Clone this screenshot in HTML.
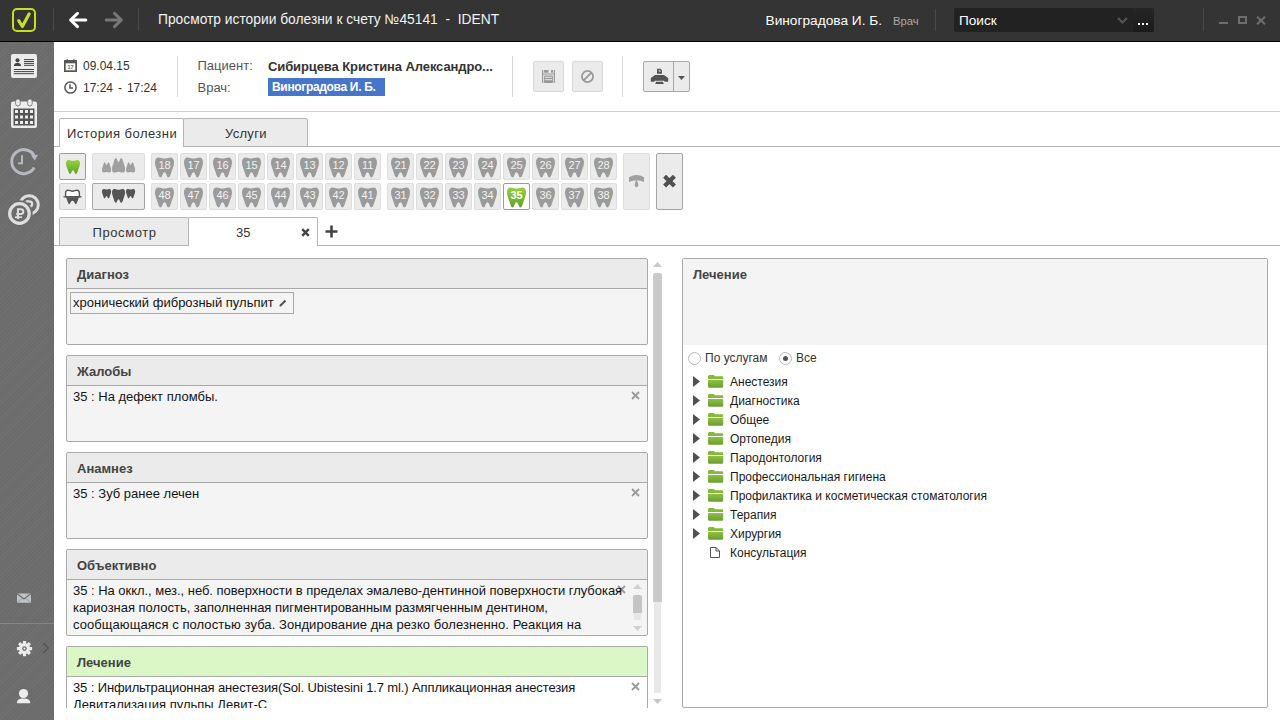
<!DOCTYPE html>
<html><head><meta charset="utf-8">
<style>
*{box-sizing:border-box;margin:0;padding:0}
html,body{width:1280px;height:720px;overflow:hidden;background:#fff;font-family:"Liberation Sans",sans-serif;color:#222}
.a{position:absolute}
.t{position:absolute;white-space:nowrap;line-height:1}
#title{left:0;top:0;width:1280px;height:41px;background:#343434}
#tline{left:0;top:41px;width:1280px;height:1px;background:#000}
#side{left:0;top:42px;width:54px;height:678px;background:repeating-linear-gradient(-45deg,#6b6b6b 0px,#6b6b6b 2px,#707070 2px,#707070 3px)}
.vsep{position:absolute;width:1px;background:#4a4a4a}
.hsep{position:absolute;width:1px;background:#d8d8d8}
.btn{position:absolute;background:#ebebeb;border:1px solid #dedede;border-radius:2px}
.tb{position:absolute;width:27px;height:27px;background:#ebebeb;border:1px solid #e0e0e0;border-radius:2px}
.tb svg{position:absolute;left:3px;top:3px}
.panel{position:absolute;left:66px;width:582px;height:87px;border:1px solid #a9a9a9;border-radius:2px;background:#f4f4f4;overflow:hidden}
.panel .hd{position:absolute;left:0;top:0;width:100%;height:30px;background:#ebebeb;border-bottom:1px solid #a9a9a9}
.panel .hd span{position:absolute;left:10px;top:9px;font-size:13px;font-weight:bold;color:#444;line-height:1}
.panel .bd{position:absolute;left:6px;top:32px;font-size:13px;line-height:17px;color:#141414;white-space:nowrap}
.panel .x{position:absolute;left:566px;top:37px}
.tree{position:absolute;left:0;font-size:12px;color:#222;white-space:nowrap}
</style></head><body>

<!-- TITLE BAR -->
<div class="a" id="title"></div>
<div class="a" id="tline"></div>
<!-- logo -->
<div class="a" style="left:12px;top:8px;width:24px;height:24px;border:2.5px solid #c6de24;border-radius:5px"></div>
<svg class="a" style="left:12px;top:8px" width="24" height="24" viewBox="0 0 24 24"><path d="M6.7 12.6 L10.4 18.5 L17.2 5.8" fill="none" stroke="#c6de24" stroke-width="3.2" stroke-linecap="round" stroke-linejoin="round"/></svg>
<div class="vsep" style="left:53px;top:8px;height:23px"></div>
<svg class="a" style="left:68px;top:11px" width="20" height="18" viewBox="0 0 20 18"><path d="M17.8 9 H3 M9.5 2.3 L2.6 9 L9.5 15.7" fill="none" stroke="#fff" stroke-width="3" stroke-linecap="round" stroke-linejoin="round"/></svg>
<svg class="a" style="left:104px;top:11px" width="20" height="18" viewBox="0 0 20 18"><path d="M2.2 9 H17 M10.5 2.3 L17.4 9 L10.5 15.7" fill="none" stroke="#777" stroke-width="3" stroke-linecap="round" stroke-linejoin="round"/></svg>
<div class="vsep" style="left:138px;top:8px;height:23px"></div>
<div class="t" style="left:158px;top:13px;font-size:13.8px;color:#f2f2f2">Просмотр истории болезни к счету №45141 &nbsp;- &nbsp;IDENT</div>
<div class="t" style="left:765.5px;top:13.5px;font-size:13.7px;color:#fff">Виноградова И. Б.</div>
<div class="t" style="left:893px;top:15.5px;font-size:11.3px;color:#aaa">Врач</div>
<div class="vsep" style="left:935px;top:9px;height:22px"></div>
<div class="a" style="left:954px;top:8px;width:200px;height:24px;background:#222;border-radius:2px"></div>
<div class="a" style="left:1133px;top:8px;width:21px;height:24px;background:linear-gradient(#262626,#1b1b1b);border-radius:0 2px 2px 0"></div>
<div class="t" style="left:959px;top:14px;font-size:13.6px;color:#fff">Поиск</div>
<svg class="a" style="left:1117px;top:17px" width="11" height="7" viewBox="0 0 11 7"><path d="M1 1 L5.5 5.5 L10 1" fill="none" stroke="#555" stroke-width="2"/></svg>
<div class="a" style="left:1138px;top:23px;width:2px;height:2px;background:#fff"></div>
<div class="a" style="left:1142px;top:23px;width:2px;height:2px;background:#fff"></div>
<div class="a" style="left:1146px;top:23px;width:2px;height:2px;background:#fff"></div>
<div class="vsep" style="left:1203px;top:8px;height:23px"></div>
<div class="a" style="left:1219px;top:22px;width:9px;height:2px;background:#6e6e6e"></div>
<div class="a" style="left:1238px;top:16px;width:9px;height:8px;border:2px solid #6e6e6e"></div>
<svg class="a" style="left:1256px;top:16px" width="10" height="9" viewBox="0 0 10 9"><path d="M1 0.8 L9 8.2 M9 0.8 L1 8.2" stroke="#6e6e6e" stroke-width="2"/></svg>

<!-- SIDEBAR -->
<div class="a" id="side"></div>

<!-- SIDEBAR ICONS -->
<svg class="a" style="left:0;top:42px" width="54" height="678" viewBox="0 42 54 678">
<!-- card -->
<rect x="11" y="54" width="26" height="24" rx="2" fill="#ececec"/>
<circle cx="17.5" cy="60.2" r="2" fill="#444"/>
<path d="M13.8 66C14.2 63.8 15.6 62.8 17.5 62.8C19.4 62.8 20.8 63.8 21.2 66Z" fill="#444"/>
<path d="M24 59.6H34M24 61.5H34M24 63.4H34M24 65.3H34M13.8 69.5H34M13.8 71.6H34M13.8 73.7H34" stroke="#444" stroke-width="1"/>
<!-- calendar -->
<rect x="11" y="101.5" width="26" height="26.5" rx="2" fill="#ececec"/>
<rect x="13.5" y="108.5" width="21" height="17" fill="#555"/>
<g fill="#ececec">
<rect x="15" y="110" width="3" height="3"/><rect x="20" y="110" width="3" height="3"/><rect x="25" y="110" width="3" height="3"/><rect x="30" y="110" width="3" height="3"/>
<rect x="15" y="115.5" width="3" height="3"/><rect x="20" y="115.5" width="3" height="3"/><rect x="25" y="115.5" width="3" height="3"/><rect x="30" y="115.5" width="3" height="3"/>
<rect x="15" y="121" width="3" height="3"/><rect x="20" y="121" width="3" height="3"/><rect x="25" y="121" width="3" height="3"/><rect x="30" y="121" width="3" height="3"/>
</g>
<rect x="15.6" y="99" width="4.6" height="7" rx="2.3" fill="#ececec" stroke="#6b6b6b" stroke-width="0.8"/>
<rect x="27.6" y="99" width="4.6" height="7" rx="2.3" fill="#ececec" stroke="#6b6b6b" stroke-width="0.8"/>
<!-- history -->
<path d="M34.6 156.5A12 12 0 1 0 34.2 167.5" fill="none" stroke="#b6b9c0" stroke-width="3"/>
<path d="M31 155.5L34.8 160.5L38 154.8Z" fill="#b6b9c0"/>
<path d="M22 155.3V163.2H18.2" fill="none" stroke="#b6b9c0" stroke-width="2"/>
<!-- coins -->
<circle cx="29.2" cy="204.8" r="9.1" fill="none" stroke="#dedede" stroke-width="3"/>
<path d="M25.8 201.3H29.2C31.3 201.3 32.2 202.6 32.2 203.9C32.2 205.3 31.2 206.6 29.2 206.6" fill="none" stroke="#dedede" stroke-width="2.2"/>
<circle cx="19.45" cy="213.5" r="13.2" fill="#6c6c6c"/>
<circle cx="19.45" cy="213.5" r="9.8" fill="none" stroke="#dedede" stroke-width="3.2"/>
<path d="M17.9 219V209.2H20.6C22.5 209.2 23.3 210.4 23.3 211.6C23.3 212.9 22.5 214.1 20.6 214.1H16.3" fill="none" stroke="#dedede" stroke-width="2"/>
<path d="M15 217.2H22" stroke="#dedede" stroke-width="1.7"/>
<!-- mail -->
<rect x="17" y="593.5" width="14" height="9.2" rx="0.8" fill="#c0c3ca"/>
<path d="M17.3 593.8L24 599L30.7 593.8" fill="none" stroke="#6c6c6c" stroke-width="1.1"/><path d="M17.5 602.5L22.3 598M30.5 602.5L25.7 598" fill="none" stroke="#8a8c90" stroke-width="0.7"/>
<!-- separator -->
<rect x="0" y="623" width="54" height="1" fill="#858585"/>
<!-- gear -->
<g transform="translate(24.5 648.6)" fill="#ececec">
<circle r="5.6"/>
<rect x="-1.6" y="-7.6" width="3.2" height="15.2"/>
<rect x="-1.6" y="-7.6" width="3.2" height="15.2" transform="rotate(45)"/>
<rect x="-1.6" y="-7.6" width="3.2" height="15.2" transform="rotate(90)"/>
<rect x="-1.6" y="-7.6" width="3.2" height="15.2" transform="rotate(135)"/>
<circle r="2.3" fill="#6b6b6b"/><circle r="1.1" fill="#ececec"/>
</g>
<path d="M43.5 643L48 648L43.5 653" fill="none" stroke="#585858" stroke-width="1.8"/>
<!-- user -->
<circle cx="23.5" cy="693.5" r="4.6" fill="#ececec"/>
<path d="M17 703.2C17 699.8 19 698.6 23.5 698.6C28 698.6 30.2 699.8 30.2 703.2Z" fill="#ececec"/>
</svg>
<!-- HEADER -->
<svg class="a" style="left:64px;top:59px" width="13" height="13" viewBox="0 0 13 13"><rect x="0.85" y="1.9" width="11.3" height="10.25" fill="none" stroke="#555" stroke-width="1.7"/><rect x="0.85" y="1.9" width="11.3" height="2.4" fill="#555"/><rect x="2.6" y="0.3" width="1.4" height="2" fill="#555"/><rect x="9" y="0.3" width="1.4" height="2" fill="#555"/><text x="6.5" y="10.2" font-size="5.5" font-weight="bold" text-anchor="middle" fill="#666" font-family="Liberation Sans">17</text></svg>
<div class="t" style="left:83px;top:60px;font-size:12px;color:#333">09.04.15</div>
<svg class="a" style="left:64px;top:81px" width="13" height="13" viewBox="0 0 13 13"><circle cx="6.5" cy="6.5" r="5.6" fill="none" stroke="#555" stroke-width="1.5"/><path d="M6 3.2 V7 H9" fill="none" stroke="#555" stroke-width="1.5"/></svg>
<div class="t" style="left:83px;top:82px;font-size:12px;color:#333;word-spacing:1.6px">17:24 - 17:24</div>
<div class="hsep" style="left:177px;top:56px;height:41px"></div>
<div class="t" style="left:197.5px;top:59px;font-size:13px;color:#555">Пациент:</div>
<div class="t" style="left:197.5px;top:80.5px;font-size:13px;color:#555">Врач:</div>
<div class="t" style="left:268px;top:59.5px;font-size:13px;font-weight:bold;color:#333;letter-spacing:-0.1px">Сибирцева Кристина Александро...</div>
<div class="a" style="left:268px;top:78px;width:117px;height:18px;background:#4775c9"></div>
<div class="t" style="left:272px;top:81px;font-size:12px;font-weight:bold;color:#fff;letter-spacing:-0.33px">Виноградова И. Б.</div>
<div class="hsep" style="left:512px;top:56px;height:41px"></div>
<div class="btn" style="left:533px;top:61px;width:31px;height:31px;border-color:#d9d9d9"></div>
<div class="btn" style="left:572px;top:61px;width:31px;height:31px;border-color:#d9d9d9"></div>
<div class="hsep" style="left:622px;top:56px;height:41px"></div>
<div class="btn" style="left:643px;top:61px;width:47px;height:31px;border-color:#a8a8a8"></div>
<div class="a" style="left:673px;top:62px;width:1px;height:29px;background:#a8a8a8"></div>
<div class="a" style="left:54px;top:111px;width:1226px;height:1px;background:#cfcfcf"></div>
<svg class="a" style="left:542px;top:70px" width="13" height="13" viewBox="0 0 13 13"><path d="M0.6 0V13M12.4 0V13" stroke="#999" stroke-width="1.2"/><rect x="2" y="0" width="4.5" height="2.7" fill="#999"/><rect x="9" y="0" width="2" height="2.7" fill="#999"/><path d="M0.6 4H12.4" stroke="#999" stroke-width="1"/><rect x="2" y="5.5" width="9" height="7.5" rx="0.8" fill="#999"/><rect x="2.8" y="6.8" width="7.4" height="1" fill="#ebebeb"/><rect x="2.8" y="9.2" width="7.4" height="1" fill="#ebebeb"/></svg>
<svg class="a" style="left:581px;top:70px" width="13" height="13" viewBox="0 0 13 13"><circle cx="6.5" cy="6.5" r="5.6" fill="none" stroke="#999" stroke-width="1.8"/><path d="M2.6 10.4L10.4 2.6" stroke="#999" stroke-width="1.8"/></svg>
<svg class="a" style="left:650px;top:68px" width="19" height="17" viewBox="0 0 19 17"><path d="M7 0.8H10.6L12 2.2V5.8H7Z" fill="#555"/><path d="M9.2 1.8V3.2H10.8" fill="none" stroke="#ebebeb" stroke-width="0.9"/><path d="M5 7H14L18.2 10V13.8H14.8L14 12.8H5L4.2 13.8H0.8V10Z" fill="#555"/><path d="M5.2 16H13.8L12.8 13.8H6.2Z" fill="#555"/></svg>
<svg class="a" style="left:678px;top:76px" width="7" height="4" viewBox="0 0 7 4"><path d="M0 0H7L3.5 4Z" fill="#555"/></svg>


<!-- MAIN TABS -->
<div class="a" style="left:54px;top:146px;width:1226px;height:1px;background:#b5b5b5"></div>
<div class="a" style="left:59px;top:118px;width:125px;height:29px;background:#fff;border:1px solid #b5b5b5;border-bottom:none;border-radius:2px 2px 0 0"></div>
<div class="a" style="left:183px;top:118px;width:125px;height:29px;background:#ebebeb;border:1px solid #b5b5b5;border-radius:2px 2px 0 0"></div>
<div class="t" style="left:67px;top:127px;font-size:13px;letter-spacing:0.45px;color:#333">История болезни</div>
<div class="t" style="left:225px;top:127px;font-size:13px;letter-spacing:0.3px;color:#333">Услуги</div>

<!-- TEETH -->
<svg width="0" height="0" style="position:absolute"><defs><path id="molar" d="M3.3 0C1.2 0 0 2 0 5C0 8 1.4 11 2.4 14C3.2 16.6 4 20 5.8 20C7.3 20 7.6 14.8 9.5 14.8C11.4 14.8 11.7 20 13.2 20C15 20 15.8 16.6 16.6 14C17.6 11 19 8 19 5C19 2 17.8 0 15.7 0C13.3 0 12 1.1 9.5 1.1C7 1.1 5.7 0 3.3 0Z"/><linearGradient id="gg" x1="0" y1="0" x2="0" y2="1"><stop offset="0" stop-color="#94d23c"/><stop offset="1" stop-color="#62a12a"/></linearGradient></defs></svg>
<div class="a" style="left:151px;top:153px;width:27px;height:27px;background:#ebebeb;border:1px solid #dedede;border-radius:2px"><svg class="a" style="left:3px;top:3px" width="19" height="21" viewBox="0 0 19 20.2"><use href="#molar" fill="#9b9b9b"/><text x="9.6" y="12" font-size="11" font-weight="normal" text-anchor="middle" fill="#f2f2f2" font-family="Liberation Sans">18</text></svg></div>
<div class="a" style="left:180px;top:153px;width:27px;height:27px;background:#ebebeb;border:1px solid #dedede;border-radius:2px"><svg class="a" style="left:3px;top:3px" width="19" height="21" viewBox="0 0 19 20.2"><use href="#molar" fill="#9b9b9b"/><text x="9.6" y="12" font-size="11" font-weight="normal" text-anchor="middle" fill="#f2f2f2" font-family="Liberation Sans">17</text></svg></div>
<div class="a" style="left:209px;top:153px;width:27px;height:27px;background:#ebebeb;border:1px solid #dedede;border-radius:2px"><svg class="a" style="left:3px;top:3px" width="19" height="21" viewBox="0 0 19 20.2"><use href="#molar" fill="#9b9b9b"/><text x="9.6" y="12" font-size="11" font-weight="normal" text-anchor="middle" fill="#f2f2f2" font-family="Liberation Sans">16</text></svg></div>
<div class="a" style="left:238px;top:153px;width:27px;height:27px;background:#ebebeb;border:1px solid #dedede;border-radius:2px"><svg class="a" style="left:3px;top:3px" width="19" height="21" viewBox="0 0 19 20.2"><use href="#molar" fill="#9b9b9b"/><text x="9.6" y="12" font-size="11" font-weight="normal" text-anchor="middle" fill="#f2f2f2" font-family="Liberation Sans">15</text></svg></div>
<div class="a" style="left:267px;top:153px;width:27px;height:27px;background:#ebebeb;border:1px solid #dedede;border-radius:2px"><svg class="a" style="left:3px;top:3px" width="19" height="21" viewBox="0 0 19 20.2"><use href="#molar" fill="#9b9b9b"/><text x="9.6" y="12" font-size="11" font-weight="normal" text-anchor="middle" fill="#f2f2f2" font-family="Liberation Sans">14</text></svg></div>
<div class="a" style="left:296px;top:153px;width:27px;height:27px;background:#ebebeb;border:1px solid #dedede;border-radius:2px"><svg class="a" style="left:3px;top:3px" width="19" height="21" viewBox="0 0 19 20.2"><use href="#molar" fill="#9b9b9b"/><text x="9.6" y="12" font-size="11" font-weight="normal" text-anchor="middle" fill="#f2f2f2" font-family="Liberation Sans">13</text></svg></div>
<div class="a" style="left:325px;top:153px;width:27px;height:27px;background:#ebebeb;border:1px solid #dedede;border-radius:2px"><svg class="a" style="left:3px;top:3px" width="19" height="21" viewBox="0 0 19 20.2"><use href="#molar" fill="#9b9b9b"/><text x="9.6" y="12" font-size="11" font-weight="normal" text-anchor="middle" fill="#f2f2f2" font-family="Liberation Sans">12</text></svg></div>
<div class="a" style="left:354px;top:153px;width:27px;height:27px;background:#ebebeb;border:1px solid #dedede;border-radius:2px"><svg class="a" style="left:3px;top:3px" width="19" height="21" viewBox="0 0 19 20.2"><use href="#molar" fill="#9b9b9b"/><text x="9.6" y="12" font-size="11" font-weight="normal" text-anchor="middle" fill="#f2f2f2" font-family="Liberation Sans">11</text></svg></div>
<div class="a" style="left:387px;top:153px;width:27px;height:27px;background:#ebebeb;border:1px solid #dedede;border-radius:2px"><svg class="a" style="left:3px;top:3px" width="19" height="21" viewBox="0 0 19 20.2"><use href="#molar" fill="#9b9b9b"/><text x="9.6" y="12" font-size="11" font-weight="normal" text-anchor="middle" fill="#f2f2f2" font-family="Liberation Sans">21</text></svg></div>
<div class="a" style="left:416px;top:153px;width:27px;height:27px;background:#ebebeb;border:1px solid #dedede;border-radius:2px"><svg class="a" style="left:3px;top:3px" width="19" height="21" viewBox="0 0 19 20.2"><use href="#molar" fill="#9b9b9b"/><text x="9.6" y="12" font-size="11" font-weight="normal" text-anchor="middle" fill="#f2f2f2" font-family="Liberation Sans">22</text></svg></div>
<div class="a" style="left:445px;top:153px;width:27px;height:27px;background:#ebebeb;border:1px solid #dedede;border-radius:2px"><svg class="a" style="left:3px;top:3px" width="19" height="21" viewBox="0 0 19 20.2"><use href="#molar" fill="#9b9b9b"/><text x="9.6" y="12" font-size="11" font-weight="normal" text-anchor="middle" fill="#f2f2f2" font-family="Liberation Sans">23</text></svg></div>
<div class="a" style="left:474px;top:153px;width:27px;height:27px;background:#ebebeb;border:1px solid #dedede;border-radius:2px"><svg class="a" style="left:3px;top:3px" width="19" height="21" viewBox="0 0 19 20.2"><use href="#molar" fill="#9b9b9b"/><text x="9.6" y="12" font-size="11" font-weight="normal" text-anchor="middle" fill="#f2f2f2" font-family="Liberation Sans">24</text></svg></div>
<div class="a" style="left:503px;top:153px;width:27px;height:27px;background:#ebebeb;border:1px solid #dedede;border-radius:2px"><svg class="a" style="left:3px;top:3px" width="19" height="21" viewBox="0 0 19 20.2"><use href="#molar" fill="#9b9b9b"/><text x="9.6" y="12" font-size="11" font-weight="normal" text-anchor="middle" fill="#f2f2f2" font-family="Liberation Sans">25</text></svg></div>
<div class="a" style="left:532px;top:153px;width:27px;height:27px;background:#ebebeb;border:1px solid #dedede;border-radius:2px"><svg class="a" style="left:3px;top:3px" width="19" height="21" viewBox="0 0 19 20.2"><use href="#molar" fill="#9b9b9b"/><text x="9.6" y="12" font-size="11" font-weight="normal" text-anchor="middle" fill="#f2f2f2" font-family="Liberation Sans">26</text></svg></div>
<div class="a" style="left:561px;top:153px;width:27px;height:27px;background:#ebebeb;border:1px solid #dedede;border-radius:2px"><svg class="a" style="left:3px;top:3px" width="19" height="21" viewBox="0 0 19 20.2"><use href="#molar" fill="#9b9b9b"/><text x="9.6" y="12" font-size="11" font-weight="normal" text-anchor="middle" fill="#f2f2f2" font-family="Liberation Sans">27</text></svg></div>
<div class="a" style="left:590px;top:153px;width:27px;height:27px;background:#ebebeb;border:1px solid #dedede;border-radius:2px"><svg class="a" style="left:3px;top:3px" width="19" height="21" viewBox="0 0 19 20.2"><use href="#molar" fill="#9b9b9b"/><text x="9.6" y="12" font-size="11" font-weight="normal" text-anchor="middle" fill="#f2f2f2" font-family="Liberation Sans">28</text></svg></div>
<div class="a" style="left:151px;top:183px;width:27px;height:27px;background:#ebebeb;border:1px solid #dedede;border-radius:2px"><svg class="a" style="left:3px;top:3px" width="19" height="21" viewBox="0 0 19 20.2"><use href="#molar" fill="#9b9b9b"/><text x="9.6" y="12" font-size="11" font-weight="normal" text-anchor="middle" fill="#f2f2f2" font-family="Liberation Sans">48</text></svg></div>
<div class="a" style="left:180px;top:183px;width:27px;height:27px;background:#ebebeb;border:1px solid #dedede;border-radius:2px"><svg class="a" style="left:3px;top:3px" width="19" height="21" viewBox="0 0 19 20.2"><use href="#molar" fill="#9b9b9b"/><text x="9.6" y="12" font-size="11" font-weight="normal" text-anchor="middle" fill="#f2f2f2" font-family="Liberation Sans">47</text></svg></div>
<div class="a" style="left:209px;top:183px;width:27px;height:27px;background:#ebebeb;border:1px solid #dedede;border-radius:2px"><svg class="a" style="left:3px;top:3px" width="19" height="21" viewBox="0 0 19 20.2"><use href="#molar" fill="#9b9b9b"/><text x="9.6" y="12" font-size="11" font-weight="normal" text-anchor="middle" fill="#f2f2f2" font-family="Liberation Sans">46</text></svg></div>
<div class="a" style="left:238px;top:183px;width:27px;height:27px;background:#ebebeb;border:1px solid #dedede;border-radius:2px"><svg class="a" style="left:3px;top:3px" width="19" height="21" viewBox="0 0 19 20.2"><use href="#molar" fill="#9b9b9b"/><text x="9.6" y="12" font-size="11" font-weight="normal" text-anchor="middle" fill="#f2f2f2" font-family="Liberation Sans">45</text></svg></div>
<div class="a" style="left:267px;top:183px;width:27px;height:27px;background:#ebebeb;border:1px solid #dedede;border-radius:2px"><svg class="a" style="left:3px;top:3px" width="19" height="21" viewBox="0 0 19 20.2"><use href="#molar" fill="#9b9b9b"/><text x="9.6" y="12" font-size="11" font-weight="normal" text-anchor="middle" fill="#f2f2f2" font-family="Liberation Sans">44</text></svg></div>
<div class="a" style="left:296px;top:183px;width:27px;height:27px;background:#ebebeb;border:1px solid #dedede;border-radius:2px"><svg class="a" style="left:3px;top:3px" width="19" height="21" viewBox="0 0 19 20.2"><use href="#molar" fill="#9b9b9b"/><text x="9.6" y="12" font-size="11" font-weight="normal" text-anchor="middle" fill="#f2f2f2" font-family="Liberation Sans">43</text></svg></div>
<div class="a" style="left:325px;top:183px;width:27px;height:27px;background:#ebebeb;border:1px solid #dedede;border-radius:2px"><svg class="a" style="left:3px;top:3px" width="19" height="21" viewBox="0 0 19 20.2"><use href="#molar" fill="#9b9b9b"/><text x="9.6" y="12" font-size="11" font-weight="normal" text-anchor="middle" fill="#f2f2f2" font-family="Liberation Sans">42</text></svg></div>
<div class="a" style="left:354px;top:183px;width:27px;height:27px;background:#ebebeb;border:1px solid #dedede;border-radius:2px"><svg class="a" style="left:3px;top:3px" width="19" height="21" viewBox="0 0 19 20.2"><use href="#molar" fill="#9b9b9b"/><text x="9.6" y="12" font-size="11" font-weight="normal" text-anchor="middle" fill="#f2f2f2" font-family="Liberation Sans">41</text></svg></div>
<div class="a" style="left:387px;top:183px;width:27px;height:27px;background:#ebebeb;border:1px solid #dedede;border-radius:2px"><svg class="a" style="left:3px;top:3px" width="19" height="21" viewBox="0 0 19 20.2"><use href="#molar" fill="#9b9b9b"/><text x="9.6" y="12" font-size="11" font-weight="normal" text-anchor="middle" fill="#f2f2f2" font-family="Liberation Sans">31</text></svg></div>
<div class="a" style="left:416px;top:183px;width:27px;height:27px;background:#ebebeb;border:1px solid #dedede;border-radius:2px"><svg class="a" style="left:3px;top:3px" width="19" height="21" viewBox="0 0 19 20.2"><use href="#molar" fill="#9b9b9b"/><text x="9.6" y="12" font-size="11" font-weight="normal" text-anchor="middle" fill="#f2f2f2" font-family="Liberation Sans">32</text></svg></div>
<div class="a" style="left:445px;top:183px;width:27px;height:27px;background:#ebebeb;border:1px solid #dedede;border-radius:2px"><svg class="a" style="left:3px;top:3px" width="19" height="21" viewBox="0 0 19 20.2"><use href="#molar" fill="#9b9b9b"/><text x="9.6" y="12" font-size="11" font-weight="normal" text-anchor="middle" fill="#f2f2f2" font-family="Liberation Sans">33</text></svg></div>
<div class="a" style="left:474px;top:183px;width:27px;height:27px;background:#ebebeb;border:1px solid #dedede;border-radius:2px"><svg class="a" style="left:3px;top:3px" width="19" height="21" viewBox="0 0 19 20.2"><use href="#molar" fill="#9b9b9b"/><text x="9.6" y="12" font-size="11" font-weight="normal" text-anchor="middle" fill="#f2f2f2" font-family="Liberation Sans">34</text></svg></div>
<div class="a" style="left:503px;top:183px;width:27px;height:27px;background:#fff;border:1px solid #8fae55;border-radius:2px"><svg class="a" style="left:3px;top:3px" width="19" height="21" viewBox="0 0 19 20.2"><use href="#molar" fill="url(#gg)"/><text x="9.6" y="12" font-size="11" font-weight="bold" text-anchor="middle" fill="#fff" font-family="Liberation Sans">35</text></svg></div>
<div class="a" style="left:532px;top:183px;width:27px;height:27px;background:#ebebeb;border:1px solid #dedede;border-radius:2px"><svg class="a" style="left:3px;top:3px" width="19" height="21" viewBox="0 0 19 20.2"><use href="#molar" fill="#9b9b9b"/><text x="9.6" y="12" font-size="11" font-weight="normal" text-anchor="middle" fill="#f2f2f2" font-family="Liberation Sans">36</text></svg></div>
<div class="a" style="left:561px;top:183px;width:27px;height:27px;background:#ebebeb;border:1px solid #dedede;border-radius:2px"><svg class="a" style="left:3px;top:3px" width="19" height="21" viewBox="0 0 19 20.2"><use href="#molar" fill="#9b9b9b"/><text x="9.6" y="12" font-size="11" font-weight="normal" text-anchor="middle" fill="#f2f2f2" font-family="Liberation Sans">37</text></svg></div>
<div class="a" style="left:590px;top:183px;width:27px;height:27px;background:#ebebeb;border:1px solid #dedede;border-radius:2px"><svg class="a" style="left:3px;top:3px" width="19" height="21" viewBox="0 0 19 20.2"><use href="#molar" fill="#9b9b9b"/><text x="9.6" y="12" font-size="11" font-weight="normal" text-anchor="middle" fill="#f2f2f2" font-family="Liberation Sans">38</text></svg></div>
<div class="a" style="left:59px;top:153px;width:27px;height:27px;background:#ebebeb;border:1px solid #8fb44e;border-radius:2px"><svg class="a" style="left:6px;top:6px" width="14" height="14" viewBox="0 0 19 20" preserveAspectRatio="none"><use href="#molar" fill="url(#gg)"/></svg></div>
<div class="a" style="left:59px;top:183px;width:27px;height:27px;background:#ebebeb;border:1px solid #cfcfcf;border-radius:2px"><svg class="a" style="left:3px;top:5px" width="19" height="16" viewBox="0 0 19 16"><path d="M5 1.2C3.2 1.2 2.6 2.6 2.6 4.2V7.8H16.4V4.2C16.4 2.6 15.8 1.2 14 1.2C12.2 1.2 11.3 2.2 9.5 2.2C7.7 2.2 6.8 1.2 5 1.2Z" fill="#fff" stroke="#555" stroke-width="1.4"/><path d="M0.5 7.8H18.5" stroke="#555" stroke-width="1.3"/><path d="M3.2 8.2H15.8C15.5 10 14.8 11.5 14.2 13C13.8 14.2 13.4 15.2 12.6 15.2C11.8 15.2 11.4 11.8 9.5 11.8C7.6 11.8 7.2 15.2 6.4 15.2C5.6 15.2 5.2 14.2 4.8 13C4.2 11.5 3.5 10 3.2 8.2Z" fill="#555"/></svg></div>
<div class="a" style="left:92px;top:153px;width:53px;height:27px;background:#ebebeb;border:1px solid #dedede;border-radius:2px"><svg class="a" style="left:9px;top:4px" width="35" height="16" viewBox="0 0 35 16"><g transform="translate(0,4.3) scale(0.48,0.51)"><g transform="translate(0,20) scale(1,-1)"><use href="#molar" fill="#a0a0a0"/></g></g><g transform="translate(10,0) scale(0.69,0.73)"><g transform="translate(0,20) scale(1,-1)"><use href="#molar" fill="#a0a0a0"/></g></g><g transform="translate(24,4.3) scale(0.48,0.51)"><g transform="translate(0,20) scale(1,-1)"><use href="#molar" fill="#a0a0a0"/></g></g></svg></div>
<div class="a" style="left:92px;top:183px;width:53px;height:27px;background:#ebebeb;border:1px solid #a6a6a6;border-radius:2px"><svg class="a" style="left:9px;top:5px" width="35" height="16" viewBox="0 0 35 16"><g transform="translate(0,0) scale(0.48,0.48)"><use href="#molar" fill="#555"/></g><g transform="translate(10,0) scale(0.69,0.69)"><use href="#molar" fill="#555"/></g><g transform="translate(24,0) scale(0.48,0.48)"><use href="#molar" fill="#555"/></g></svg></div>
<div class="a" style="left:623px;top:153px;width:27px;height:57px;background:#ebebeb;border:1px solid #dedede;border-radius:2px"><svg class="a" style="left:5px;top:20px" width="17" height="14" viewBox="0 0 17 14"><path d="M0 3.2Q7.5 -1.4 15 3.2V8Q7.5 4.6 0 8Z" fill="#a0a0a0"/><path d="M7.5 5.5C6.2 8.2 5.7 9.8 5.7 11.1C5.7 12.3 6.5 13.2 7.5 13.2C8.5 13.2 9.3 12.3 9.3 11.1C9.3 9.8 8.8 8.2 7.5 5.5Z" fill="#a0a0a0"/></svg></div>
<div class="a" style="left:656px;top:153px;width:27px;height:57px;background:#ebebeb;border:1px solid #a6a6a6;border-radius:2px"><svg class="a" style="left:6px;top:21px" width="14" height="14" viewBox="0 0 14 14"><path d="M1.6 1.2L11.4 11M11.4 1.2L1.6 11" stroke="#505050" stroke-width="4.2"/></svg></div>
<!-- /TEETH -->
<!-- SUB TABS -->
<div class="a" style="left:54px;top:245px;width:1226px;height:1px;background:#b5b5b5"></div>
<div class="a" style="left:59px;top:217px;width:130px;height:29px;background:#ebebeb;border:1px solid #b5b5b5;border-radius:2px 2px 0 0"></div>
<div class="a" style="left:188px;top:217px;width:130px;height:29px;background:#fff;border:1px solid #b5b5b5;border-bottom:none;border-radius:2px 2px 0 0"></div>
<div class="t" style="left:92.5px;top:226px;font-size:13px;letter-spacing:0.6px;color:#333">Просмотр</div>
<div class="t" style="left:236px;top:226px;font-size:13px;color:#333">35</div>

<svg class="a" style="left:301px;top:228px" width="9" height="9" viewBox="0 0 9 9"><path d="M1.2 1.2L7.8 7.8M7.8 1.2L1.2 7.8" stroke="#444" stroke-width="2.4"/></svg>
<svg class="a" style="left:325px;top:225px" width="13" height="13" viewBox="0 0 13 13"><path d="M6.5 0.5V12.5M0.5 6.5H12.5" stroke="#444" stroke-width="2.6"/></svg>
<!-- PANELS -->
<div class="panel" style="top:258px"><div class="hd"><span>Диагноз</span></div><div class="a" style="left:3px;top:33px;width:224px;height:22px;border:1px solid #a9a9a9;background:#f4f4f4"></div><div class="bd" style="top:35px">хронический фиброзный пульпит</div><svg class="a" style="left:212px;top:40px" width="8" height="8" viewBox="0 0 8 8"><path d="M1 7L6.5 1.5" stroke="#555" stroke-width="2.2"/><path d="M0.5 7.5L1.5 5.5L2.5 6.5Z" fill="#555"/></svg></div>
<div class="panel" style="top:355px"><div class="hd"><span>Жалобы</span></div><svg class="x" style="left:564px;top:35px" width="9" height="9" viewBox="0 0 9 9"><path d="M1 1L8 8M8 1L1 8" stroke="#9a9a9a" stroke-width="1.8"/></svg><div class="bd">35 : На дефект пломбы.</div></div>
<div class="panel" style="top:452px"><div class="hd"><span>Анамнез</span></div><svg class="x" style="left:564px;top:35px" width="9" height="9" viewBox="0 0 9 9"><path d="M1 1L8 8M8 1L1 8" stroke="#9a9a9a" stroke-width="1.8"/></svg><div class="bd">35 : Зуб ранее лечен</div></div>
<div class="panel" style="top:549px"><div class="hd"><span>Объективно</span></div><svg class="x" style="left:550px;top:35px" width="9" height="9" viewBox="0 0 9 9"><path d="M1 1L8 8M8 1L1 8" stroke="#9a9a9a" stroke-width="1.8"/></svg><div class="bd" style="top:32px"><span style="letter-spacing:-0.03px">35 : На оккл., мез., неб. поверхности в пределах эмалево-дентинной поверхности глубокая</span><br><span style="letter-spacing:-0.02px">кариозная полость, заполненная пигментированным размягченным дентином,</span><br><span style="letter-spacing:0.065px">сообщающаяся с полостью зуба. Зондирование дна резко болезненно. Реакция на</span></div></div>
<div class="panel" style="top:646px;height:62px;background:#fff;border-bottom:none;border-radius:2px 2px 0 0"><div class="hd" style="background:#dcf7c6"><span>Лечение</span></div><svg class="x" style="left:564px;top:35px" width="9" height="9" viewBox="0 0 9 9"><path d="M1 1L8 8M8 1L1 8" stroke="#9a9a9a" stroke-width="1.8"/></svg><div class="bd" style="top:32px"><span style="letter-spacing:-0.125px">35 : Инфильтрационная анестезия(Sol. Ubistesini 1.7 ml.) Аппликационная анестезия</span><br>Девитализация пульпы Девит-С</div></div>

<!-- RIGHT PANEL -->
<div class="a" style="left:682px;top:258px;width:586px;height:450px;border:1px solid #a9a9a9;border-radius:2px;background:#fff"></div>
<div class="a" style="left:683px;top:259px;width:584px;height:86px;background:#f4f4f4"></div>
<div class="t" style="left:693px;top:267.5px;font-size:13px;font-weight:bold;color:#444">Лечение</div>

<!-- SCROLLBAR -->
<svg class="a" style="left:653px;top:262px" width="9" height="5" viewBox="0 0 9 5"><path d="M0 5L4.5 0L9 5Z" fill="#c8c8c8"/></svg>
<div class="a" style="left:653px;top:273px;width:9px;height:330px;background:#cacaca;border-radius:2px"></div>
<div class="a" style="left:654px;top:602px;width:7px;height:91px;background:#e8e8e8"></div>
<svg class="a" style="left:653px;top:699px" width="9" height="5" viewBox="0 0 9 5"><path d="M0 0L4.5 5L9 0Z" fill="#c8c8c8"/></svg>
<!-- inner scroll -->
<svg class="a" style="left:633px;top:584px" width="9" height="5" viewBox="0 0 9 5"><path d="M0 5L4.5 0L9 5Z" fill="#d0d0d0"/></svg>
<div class="a" style="left:633px;top:595px;width:9px;height:19px;background:#c4c4c4;border-radius:2px"></div>
<div class="a" style="left:634px;top:613px;width:7px;height:7px;background:#e6e6e6"></div>
<svg class="a" style="left:633px;top:626px" width="9" height="5" viewBox="0 0 9 5"><path d="M0 0L4.5 5L9 0Z" fill="#d0d0d0"/></svg>
<!-- RADIOS -->
<div class="a" style="left:688px;top:352px;width:13px;height:13px;border:1px solid #b8b8b8;border-radius:50%;background:#fff"></div>
<div class="t" style="left:705px;top:352px;font-size:12px;color:#333">По услугам</div>
<div class="a" style="left:779px;top:352px;width:13px;height:13px;border:1px solid #b8b8b8;border-radius:50%;background:#fff"></div>
<div class="a" style="left:783px;top:356px;width:5px;height:5px;border-radius:50%;background:#555"></div>
<div class="t" style="left:796px;top:352px;font-size:12px;color:#333">Все</div>
<!-- TREE -->
<svg width="0" height="0" style="position:absolute"><defs><linearGradient id="fg" x1="0" y1="0" x2="0" y2="1"><stop offset="0" stop-color="#8dc046"/><stop offset="1" stop-color="#6b9d30"/></linearGradient><g id="arr"><path d="M0 0L7 5.5L0 11Z" fill="#505050"/></g><g id="fold"><path d="M0 4V1.6C0 0.7 0.7 0 1.6 0H5.2C6 0 6.4 0.5 6.9 1.3H14C14.7 1.3 15.2 1.8 15.2 2.5V4Z" fill="#84bb35"/><path d="M0 5H15.2V11.2C15.2 12.1 14.5 12.8 13.6 12.8H1.6C0.7 12.8 0 12.1 0 11.2Z" fill="url(#fg)"/></g></defs></svg>
<svg class="a" style="left:693px;top:376px" width="7" height="11"><use href="#arr"/></svg><svg class="a" style="left:708px;top:375px" width="16" height="13"><use href="#fold"/></svg><div class="t" style="left:730px;top:376px;font-size:12px;color:#1a1a1a">Анестезия</div>
<svg class="a" style="left:693px;top:395px" width="7" height="11"><use href="#arr"/></svg><svg class="a" style="left:708px;top:394px" width="16" height="13"><use href="#fold"/></svg><div class="t" style="left:730px;top:395px;font-size:12px;color:#1a1a1a">Диагностика</div>
<svg class="a" style="left:693px;top:414px" width="7" height="11"><use href="#arr"/></svg><svg class="a" style="left:708px;top:413px" width="16" height="13"><use href="#fold"/></svg><div class="t" style="left:730px;top:414px;font-size:12px;color:#1a1a1a">Общее</div>
<svg class="a" style="left:693px;top:433px" width="7" height="11"><use href="#arr"/></svg><svg class="a" style="left:708px;top:432px" width="16" height="13"><use href="#fold"/></svg><div class="t" style="left:730px;top:433px;font-size:12px;color:#1a1a1a">Ортопедия</div>
<svg class="a" style="left:693px;top:452px" width="7" height="11"><use href="#arr"/></svg><svg class="a" style="left:708px;top:451px" width="16" height="13"><use href="#fold"/></svg><div class="t" style="left:730px;top:452px;font-size:12px;color:#1a1a1a">Пародонтология</div>
<svg class="a" style="left:693px;top:471px" width="7" height="11"><use href="#arr"/></svg><svg class="a" style="left:708px;top:470px" width="16" height="13"><use href="#fold"/></svg><div class="t" style="left:730px;top:471px;font-size:12px;color:#1a1a1a">Профессиональная гигиена</div>
<svg class="a" style="left:693px;top:490px" width="7" height="11"><use href="#arr"/></svg><svg class="a" style="left:708px;top:489px" width="16" height="13"><use href="#fold"/></svg><div class="t" style="left:730px;top:490px;font-size:12px;color:#1a1a1a">Профилактика и косметическая стоматология</div>
<svg class="a" style="left:693px;top:509px" width="7" height="11"><use href="#arr"/></svg><svg class="a" style="left:708px;top:508px" width="16" height="13"><use href="#fold"/></svg><div class="t" style="left:730px;top:509px;font-size:12px;color:#1a1a1a">Терапия</div>
<svg class="a" style="left:693px;top:528px" width="7" height="11"><use href="#arr"/></svg><svg class="a" style="left:708px;top:527px" width="16" height="13"><use href="#fold"/></svg><div class="t" style="left:730px;top:528px;font-size:12px;color:#1a1a1a">Хирургия</div>
<svg class="a" style="left:710px;top:547px" width="10" height="11" viewBox="0 0 10 11"><path d="M0.5 0.5H6L9.5 4V10.5H0.5Z" fill="#fff" stroke="#555" stroke-width="1"/><path d="M6 0.5V4H9.5" fill="none" stroke="#555" stroke-width="1"/></svg><div class="t" style="left:730px;top:547px;font-size:12px;color:#1a1a1a">Консультация</div>
</body></html>
